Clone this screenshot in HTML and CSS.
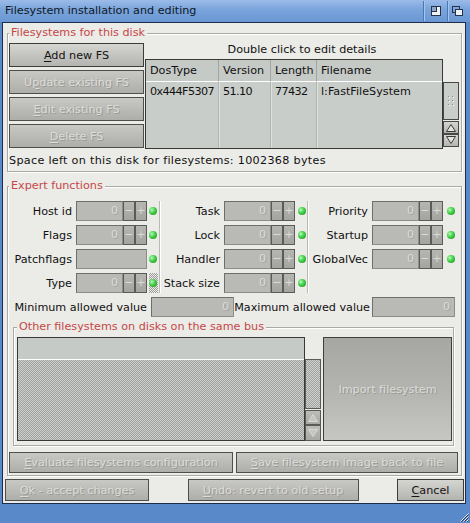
FILE: index.html
```html
<!DOCTYPE html>
<html>
<head>
<meta charset="utf-8">
<link rel="stylesheet" href="styles.css">
</head>
<body>
<div class="titlebar">
  <span class="title">Filesystem installation and editing</span>
  <span class="gadgets">
    <span class="gsep"></span>
    <svg class="gad1" width="10" height="10" viewBox="0 0 10 10"><rect x="0.5" y="0.5" width="9" height="9" fill="#eef2f8" stroke="#25324a"/><rect x="0.5" y="0.5" width="5" height="5" fill="#8fa6c8" stroke="#25324a"/></svg>
    <span class="gsep"></span>
    <svg class="gad2" width="11" height="10" viewBox="0 0 11 10"><rect x="0.5" y="0.5" width="7" height="6" fill="none" stroke="#25324a"/><rect x="3.5" y="3.5" width="7" height="6" fill="#eef2f8" stroke="#25324a"/></svg>
  </span>
</div>
<div class="content">
  <fieldset class="grp g1">
    <legend>Filesystems for this disk</legend>
    <div class="g1row">
      <div class="btncol">
        <div class="btn b24"><span><u>A</u>dd new FS</span></div>
        <div class="btn b24 dis"><span>U<u>p</u>date existing FS</span></div>
        <div class="btn b24 dis"><span><u>E</u>dit existing FS</span></div>
        <div class="btn b24 dis"><span><u>D</u>elete FS</span></div>
      </div>
      <div class="lvcol">
        <div class="caption">Double click to edit details</div>
        <div class="lvrow">
          <div class="lv">
            <div class="h">DosType</div>
            <div class="h">Version</div>
            <div class="h">Length</div>
            <div class="h last">Filename</div>
            <div class="d digits">0x444F5307</div>
            <div class="d digits">51.10</div>
            <div class="d digits">77432</div>
            <div class="d last">l:FastFileSystem</div>
          </div>
          <div class="sb">
            <div class="knob">
              <svg width="6" height="11" viewBox="0 0 6 11"><g fill="#8e928e"><rect x="0" y="0" width="1" height="1"/><rect x="4" y="0" width="1" height="1"/><rect x="0" y="4" width="1" height="1"/><rect x="4" y="4" width="1" height="1"/><rect x="0" y="8" width="1" height="1"/><rect x="4" y="8" width="1" height="1"/></g><g fill="#ffffff"><rect x="1" y="1" width="1" height="1"/><rect x="5" y="1" width="1" height="1"/><rect x="1" y="5" width="1" height="1"/><rect x="5" y="5" width="1" height="1"/><rect x="1" y="9" width="1" height="1"/><rect x="5" y="9" width="1" height="1"/></g></svg>
            </div>
            <div class="arrow up"><svg width="14" height="11" viewBox="0 0 14 11"><path d="M2.5 9.5 L7 2.5 L11.5 9.5 Z" fill="#e4e4e0" stroke="#3a3a38"/></svg></div>
            <div class="arrow dn"><svg width="14" height="11" viewBox="0 0 14 11"><path d="M2.5 1.5 L7 8.5 L11.5 1.5 Z" fill="#e4e4e0" stroke="#3a3a38"/></svg></div>
          </div>
        </div>
      </div>
    </div>
    <div class="space">Space left on this disk for filesystems: 1002368 bytes</div>
  </fieldset>

  <fieldset class="grp g2">
    <legend>Expert functions</legend>
    <div class="erows">
      <div class="ecol c1">
        <span class="lbl">Host id</span>
        <div class="spin"><span class="num">0</span><span class="sbtn">−</span><span class="sbtn">+</span></div>
        <span class="ledcell"><span class="led"></span></span>
        <span class="lbl">Flags</span>
        <div class="spin"><span class="num">0</span><span class="sbtn">−</span><span class="sbtn">+</span></div>
        <span class="ledcell"><span class="led"></span></span>
        <span class="lbl">Patchflags</span>
        <div class="spin"><span class="num wide"></span></div>
        <span class="ledcell"><span class="led"></span></span>
        <span class="lbl">Type</span>
        <div class="spin"><span class="num">0</span><span class="sbtn">−</span><span class="sbtn">+</span></div>
        <span class="ledcell focus"><span class="led"></span></span>
      </div>
      <div class="ecol c2">
        <span class="lbl">Task</span>
        <div class="spin"><span class="num">0</span><span class="sbtn">−</span><span class="sbtn">+</span></div>
        <span class="ledcell"><span class="led"></span></span>
        <span class="lbl">Lock</span>
        <div class="spin"><span class="num">0</span><span class="sbtn">−</span><span class="sbtn">+</span></div>
        <span class="ledcell"><span class="led"></span></span>
        <span class="lbl">Handler</span>
        <div class="spin"><span class="num">0</span><span class="sbtn">−</span><span class="sbtn">+</span></div>
        <span class="ledcell"><span class="led"></span></span>
        <span class="lbl">Stack size</span>
        <div class="spin"><span class="num">0</span><span class="sbtn">−</span><span class="sbtn">+</span></div>
        <span class="ledcell"><span class="led"></span></span>
      </div>
      <div class="ecol c3">
        <span class="lbl">Priority</span>
        <div class="spin"><span class="num">0</span><span class="sbtn">−</span><span class="sbtn">+</span></div>
        <span class="ledcell"><span class="led"></span></span>
        <span class="lbl">Startup</span>
        <div class="spin"><span class="num">0</span><span class="sbtn">−</span><span class="sbtn">+</span></div>
        <span class="ledcell"><span class="led"></span></span>
        <span class="lbl">GlobalVec</span>
        <div class="spin"><span class="num">0</span><span class="sbtn">−</span><span class="sbtn">+</span></div>
        <span class="ledcell"><span class="led"></span></span>
      </div>
    </div>
    <div class="mrow">
      <span class="mlab1">Minimum allowed value</span>
      <span class="mfield">0</span>
      <span class="mlab2">Maximum allowed value</span>
      <span class="mfield">0</span>
    </div>

    <fieldset class="grp g3">
      <legend>Other filesystems on disks on the same bus</legend>
      <div class="g3row">
        <div class="lv2">
          <div class="h2"></div>
          <div class="b2"></div>
        </div>
        <div class="sb2">
          <div class="knob2"></div>
          <div class="arrow2 up2"><svg width="14" height="13" viewBox="0 0 14 13"><path d="M2.5 10.5 L7 3.5 L11.5 10.5 Z" fill="#c4c4c0" stroke="#d8d8d4"/></svg></div>
          <div class="arrow2 dn2"><svg width="14" height="13" viewBox="0 0 14 13"><path d="M2.5 2.5 L7 9.5 L11.5 2.5 Z" fill="#c4c4c0" stroke="#d8d8d4"/></svg></div>
        </div>
        <div class="btn imp dis"><span>Import filesystem</span></div>
      </div>
    </fieldset>

    <div class="erow2">
      <div class="btn b21 dis"><span><u>E</u>valuate filesystems configuration</span></div>
      <div class="btn b21 dis"><span><u>S</u>ave filesystem image back to file</span></div>
    </div>
  </fieldset>

  <div class="brow">
    <div class="btn b22 dis ok"><span><u>O</u>k - accept changes</span></div>
    <div class="btn b22 dis undo"><span><u>U</u>ndo: revert to old setup</span></div>
    <div class="btn b22 cancel"><span><u>C</u>ancel</span></div>
  </div>
</div>
<div class="foot">
  <svg width="10" height="10" viewBox="0 0 10 10"><g stroke="#e8eef8" stroke-width="1"><path d="M9.5 1.5 L1.5 9.5"/><path d="M9.5 4.5 L4.5 9.5"/><path d="M9.5 7.5 L7.5 9.5"/></g><g stroke="#203050" stroke-width="1"><path d="M9.5 2.5 L2.5 9.5"/><path d="M9.5 5.5 L5.5 9.5"/><path d="M9.5 8.5 L8.5 9.5"/></g></svg>
</div>
</body>
</html>
```

FILE: styles.css
```css
* { box-sizing: border-box; }
html, body { margin: 0; padding: 0; }
body {
  width: 470px;
  height: 523px;
  overflow: hidden;
  background: #5a89ca;
  font-family: "DejaVu Sans", "Noto Sans", sans-serif;
  font-size: 11.2px;
  color: #111;
}
u { text-decoration: underline; text-underline-offset: 2px; }

/* title bar */
.titlebar {
  height: 22px;
  display: flex;
  align-items: center;
  padding-left: 5px;
  background: linear-gradient(#9bbce9, #79a3db 45%, #6a97d3);
}
.title { flex: 1; color: #0f1826; line-height: 22px; white-space: nowrap; }
.gadgets { display: flex; align-items: center; height: 22px; }
.gsep { width: 1px; height: 20px; background: #4b76b2; box-shadow: 1px 0 0 #a9c4ea; }
.gad1 { margin: 0 6px 0 7px; }
.gad2 { margin: 0 7px 0 4px; }

/* window body */
.content {
  margin-left: 2px;
  width: 464px;
  border: 1px solid #1c2c4c;
  background: #ebebe7;
  padding-bottom: 2px;
}

.grp {
  margin: 0 3px 0 4px;
  padding: 0;
  min-width: 0;
  border: 1px solid #a9a9a5;
  box-shadow: inset 1px 1px 0 #ffffff, 1px 1px 0 #ffffff;
}
.grp > legend {
  padding: 0 2px;
  margin-left: 0;
  line-height: 14px;
  color: #c64747;
  background: #ebebe7;
  white-space: nowrap;
}

/* group 1 */
.g1 { margin-top: 3px; padding: 3px 2px 3px 1px; }
.g1row { display: flex; gap: 1px; }
.btncol { width: 135px; display: flex; flex-direction: column; gap: 3px; }

.btn {
  border: 1px solid #3c3c3a;
  background: linear-gradient(#d5d5d1, #b3b3af);
  display: flex;
  align-items: center;
  justify-content: center;
  white-space: nowrap;
  color: #141414;
}
.btn.dis {
  color: #dcdcd8;
  text-shadow: 1px 1px 0 #9a9a96;
  background: linear-gradient(#c8c8c4, #adada9);
  border-color: #4e4e4a;
}
.b24 { height: 24px; }
.b21 { height: 21px; }
.b22 { height: 22px; }

.lvcol { width: 314px; display: flex; flex-direction: column; }
.caption { height: 16px; line-height: 14px; text-align: center; }
.lvrow { display: flex; align-items: flex-start; }
.lv {
  width: 298px;
  height: 90px;
  border: 1px solid #383836;
  display: grid;
  grid-template-columns: 73px 52px 46px 1fr;
  grid-template-rows: 22px 1fr;
  background: #c9cdc9;
}
.lv .h {
  background: #c6cac6;
  border-bottom: 1px solid #ffffff;
  border-right: 1px solid #a2a6a2;
  padding-left: 4px;
  line-height: 21px;
  white-space: nowrap;
}
.lv .d {
  border-right: 1px solid #b3b7b3;
  box-shadow: 1px 0 0 #dde0dd;
  padding: 3px 0 0 4px;
  line-height: 14px;
  white-space: nowrap;
  overflow: hidden;
}
.lv .d.digits { letter-spacing: -0.6px; }
.lv .last { border-right: none; box-shadow: none; }

.sb { width: 16px; margin-top: 23px; display: flex; flex-direction: column; }
.knob {
  height: 38px;
  border: 1px solid #484846;
  background: #cacecb;
  display: flex;
  align-items: center;
  justify-content: center;
  margin-bottom: 1px;
}
.arrow {
  height: 13px;
  border: 1px solid #484846;
  background: linear-gradient(#d4d4d0, #b4b4b0);
  display: flex;
  align-items: center;
  justify-content: center;
}

.space { margin-top: 4px; line-height: 15px; white-space: nowrap; letter-spacing: 0.3px; }

/* group 2 */
.g2 { margin-top: 7px; padding: 8px 0 2px 0; }
.g2 > legend { margin-left: 1px; }
.erows { display: flex; }
.ecol {
  display: grid;
  grid-template-columns: 64px 71px 12px;
  grid-auto-rows: 20px;
  row-gap: 4px;
  align-items: center;
  align-content: start;
}
.ecol.c1 { grid-template-columns: 68px 71px 12px; border-right: 1px solid #b9b9b5; box-shadow: 1px 0 0 #fff; }
.ecol.c2 { border-right: 1px solid #b9b9b5; box-shadow: 1px 0 0 #fff; }
.lbl { text-align: right; padding-right: 4px; white-space: nowrap; }
.spin { display: flex; height: 20px; }
.num {
  width: 47px;
  height: 20px;
  border: 1px solid #6e6e6a;
  border-right-color: #8c8c88;
  border-bottom-color: #8c8c88;
  background: #b9b9b5;
  color: #dcdcd8;
  text-shadow: 1px 1px 0 #a2a29e;
  text-align: right;
  padding-right: 4px;
  line-height: 18px;
}
.num.wide { width: 71px; }
.sbtn {
  width: 12px;
  height: 20px;
  border: 1px solid #5a5a56;
  background: linear-gradient(#b6b6b2, #a3a39f);
  color: #dadad6;
  text-align: center;
  line-height: 18px;
}
.ledcell { height: 20px; display: flex; align-items: center; }
.c1 .ledcell { padding-left: 2px; }
.c2 .ledcell { padding-left: 3px; }
.c3 .ledcell { padding-left: 4px; }
.ledcell.focus {
  background: repeating-conic-gradient(#9a9c9a 0 25%, #ebebe7 0 50%) 0 0 / 2px 2px;
  width: 9px;
  margin-left: 2px;
  padding-left: 0;
}
.led {
  width: 8px;
  height: 8px;
  border-radius: 50%;
  background: radial-gradient(circle at 35% 35%, #b8f8b8 0, #3fcf46 45%, #1e8a26 100%);
}

.mrow { display: flex; align-items: center; height: 20px; margin-top: 4px; }
.mlab1 { width: 143px; text-align: right; padding-right: 4px; white-space: nowrap; }
.mlab2 { width: 138px; text-align: right; padding-right: 2px; white-space: nowrap; }
.mfield {
  width: 83px;
  height: 20px;
  border: 1px solid #6e6e6a;
  border-right-color: #8c8c88;
  border-bottom-color: #8c8c88;
  background: #b9b9b5;
  color: #dcdcd8;
  text-shadow: 1px 1px 0 #a2a29e;
  text-align: right;
  padding-right: 4px;
  line-height: 18px;
}

/* group 3 */
.g3 { margin: 3px 7px 0 5px; padding: 3px 1px 4px 3px; }
.g3row { display: flex; height: 104px; }
.lv2 {
  width: 288px;
  height: 104px;
  border: 1px solid #383836;
  display: flex;
  flex-direction: column;
}
.h2 { height: 22px; background: #c6cac6; border-bottom: 1px solid #ffffff; }
.b2 {
  flex: 1;
  background: repeating-conic-gradient(#9ea09e 0 25%, #cfd1cf 0 50%) 0 0 / 2px 2px;
}
.sb2 { width: 16px; margin-top: 22px; height: 82px; display: flex; flex-direction: column; }
.knob2 {
  height: 50px;
  border: 1px solid #5a5a58;
  background: repeating-conic-gradient(#9ea09e 0 25%, #d2d4d2 0 50%) 0 0 / 2px 2px;
  margin-bottom: 1px;
}
.arrow2 {
  border: 1px solid #5a5a58;
  background: linear-gradient(#bcbcb8, #a8a8a4);
  display: flex;
  align-items: center;
  justify-content: center;
}
.up2 { height: 15px; }
.dn2 { height: 16px; }
.btn.imp {
  width: 129px;
  height: 104px;
  margin-left: 2px;
  background: linear-gradient(#a6a6a2, #b3b3af 50%, #c6c6c2);
  border-color: #3e3e3a;
}

.erow2 {
  display: grid;
  grid-template-columns: 224px 222px;
  column-gap: 3px;
  margin-top: 6px;
  padding-left: 1px;
}

/* bottom buttons */
.brow {
  display: flex;
  justify-content: space-between;
  margin-top: 3px;
  padding: 0 1px 0 2px;
}
.ok { width: 144px; }
.undo { width: 171px; }
.cancel { width: 67px; }

.foot {
  height: 19px;
  display: flex;
  justify-content: flex-end;
  align-items: flex-end;
  padding: 0 1px 1px 0;
}
```
